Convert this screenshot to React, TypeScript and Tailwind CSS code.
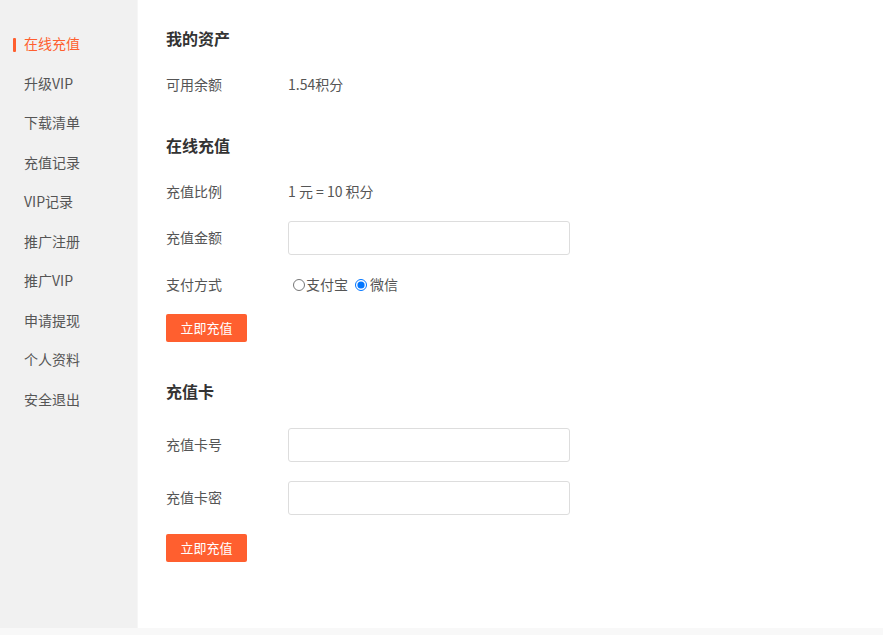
import React, { useState } from 'react';

const menu = ['在线充值', '升级VIP', '下载清单', '充值记录', 'VIP记录', '推广注册', '推广VIP', '申请提现', '个人资料', '安全退出'];

const Row = ({ label, className = '', children }: { label: string; className?: string; children: React.ReactNode }) => (
  <div className={`flex items-center h-[34px] ${className}`}>
    <div className="w-[122px] pb-[2px] text-[14px] text-[#555]">{label}</div>
    <div className="flex items-center text-[14px] text-[#555]">{children}</div>
  </div>
);

const Field = () => (
  <input type="text" className="w-[282px] h-[34px] border border-[#dddddd] rounded-[3px] bg-white outline-none px-2 text-[14px]" />
);

const SubmitButton = ({ className = '' }: { className?: string }) => (
  <button className={`h-[28px] w-[81px] pb-[1px] bg-[#ff5f2f] text-white text-[13px] rounded-[2px] ${className}`}>立即充值</button>
);

export default function App() {
  const [pay, setPay] = useState('wechat');

  return (
    <div className="min-h-screen bg-[#f8f8f8]" style={{ fontFamily: '"Noto Sans CJK SC", "Noto Sans", sans-serif' }}>
      <div className="flex h-[628px]">
        <aside className="w-[138px] bg-[#f1f1f1] border-r border-[#f6f6f6] pt-[24px] shrink-0">
          {menu.map((item, i) => (
            <div key={item} className="relative h-[39.5px] flex items-center pl-[24px] text-[14px]">
              {i === 0 && <span className="absolute left-[13px] top-[14px] w-[3px] h-[14px] bg-[#ff5f2f] rounded-[1px]" />}
              <span className={i === 0 ? 'text-[#ff5f2f]' : 'text-[#555]'}>{item}</span>
            </div>
          ))}
        </aside>

        <main className="flex-1 bg-white pl-[28px] pt-[26px]">
          <h2 className="h-[24px] leading-[24px] text-[16px] font-bold text-[#333]">我的资产</h2>
          <Row label="可用余额" className="mt-[18px]"><span className="pb-[2px]">1.54积分</span></Row>

          <h2 className="mt-[31px] h-[24px] leading-[24px] text-[16px] font-bold text-[#333]">在线充值</h2>
          <Row label="充值比例" className="mt-[18px]"><span className="pb-[2px]">1 元 = 10 积分</span></Row>
          <Row label="充值金额" className="mt-[12px]"><Field /></Row>
          <Row label="支付方式" className="mt-[13px]">
            <label className="flex items-center pb-[2px]">
              <input type="radio" name="pay" checked={pay === 'alipay'} onChange={() => setPay('alipay')} className="m-0 mr-[1px] ml-[5px] mt-[2px] w-[12px] h-[12px]" />
              支付宝
            </label>
            <label className="flex items-center ml-[2px] pb-[2px]">
              <input type="radio" name="pay" checked={pay === 'wechat'} onChange={() => setPay('wechat')} className="m-0 mr-[3px] ml-[5px] mt-[2px] w-[12px] h-[12px]" />
              微信
            </label>
          </Row>
          <SubmitButton className="mt-[12px] block" />

          <h2 className="mt-[37px] h-[24px] leading-[24px] text-[16px] font-bold text-[#333]">充值卡</h2>
          <Row label="充值卡号" className="mt-[25px]"><Field /></Row>
          <Row label="充值卡密" className="mt-[19px]"><Field /></Row>
          <SubmitButton className="mt-[19px] block" />
        </main>
      </div>
    </div>
  );
}
